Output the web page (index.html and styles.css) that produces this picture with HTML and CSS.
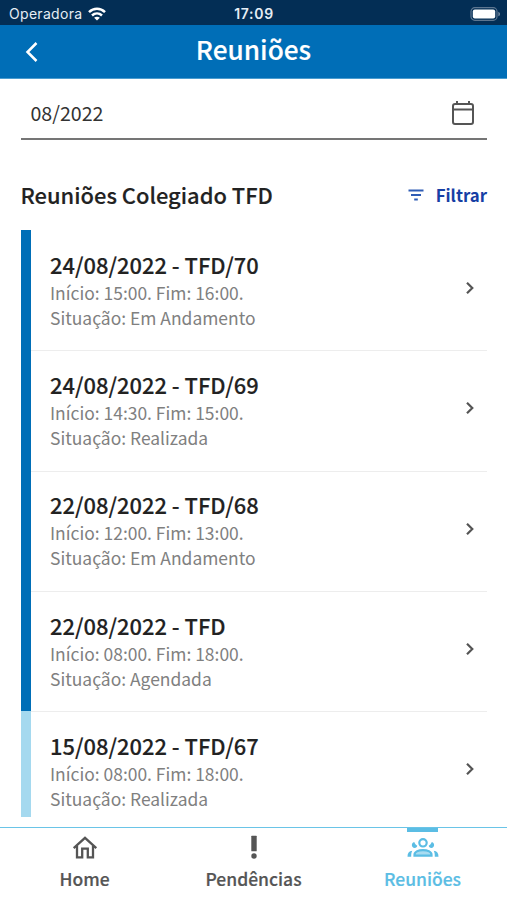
FILE: index.html
```html
<!DOCTYPE html>
<html lang="pt-BR">
<head>
<meta charset="utf-8">
<title>Reuniões</title>
<link rel="stylesheet" href="styles.css">
</head>
<body>
<div class="app">
  <div class="status">
    <div class="carrier"><span class="carrier-name">Operadora</span>
      <svg class="wifi" viewBox="0 0 18 14" width="18" height="14" fill="none" stroke="#fff" stroke-width="2.5"><path d="M1 5.2C5.6.7 12.4.7 17 5.2M4 8.5c2.9-2.7 7.1-2.7 10 0"/><path d="M9 13.6 6.1 10.8c1.7-1.5 4.1-1.5 5.8 0z" fill="#fff" stroke="none"/></svg>
    </div>
    <span class="clock">17:09</span>
    <svg class="battery" viewBox="0 0 31 14" width="31" height="14"><rect x="1" y=".7" width="26" height="12.6" rx="3.8" fill="none" stroke="#5d7690" stroke-width="1.2"/><rect x="2.8" y="2.5" width="22.4" height="9" rx="2" fill="#fff"/><path d="M28.3 4.7c2.3.9 2.3 3.7 0 4.6z" fill="#7389a0"/></svg>
  </div>
  <header class="header">
    <svg class="back" viewBox="0 0 14 22" width="14" height="22" fill="none" stroke="#fff" stroke-width="2.5"><path d="M12.5 2 3.5 11l9 9"/></svg>
    <h1 class="title">Reuniões</h1>
  </header>
  <main class="content">
    <div class="field"><span class="field-value">08/2022</span>
      <svg class="calendar" viewBox="0 0 24 26" width="24" height="26" fill="none" stroke="#555" stroke-width="2"><rect x="2" y="4" width="20" height="20" rx="2"/><path d="M2 9.4h20M6 1v3M18 1v3"/></svg>
    </div>
    <div class="section">
      <h2 class="section-title">Reuniões Colegiado TFD</h2>
      <div class="filter"><svg viewBox="0 0 16 12" width="16" height="12" stroke="#2f5db5" stroke-width="2"><path d="M.5 1.6h15M3 6h10M6.2 10.4h3.6"/></svg><span class="filter-label">Filtrar</span></div>
    </div>
    <div class="list">
      <div class="row"><div class="info"><h3 class="name">24/08/2022 - TFD/70</h3><p class="detail">Início: 15:00. Fim: 16:00.</p><p class="detail">Situação: Em Andamento</p></div><svg class="chevron" viewBox="0 0 10 14" width="10" height="14"><path d="m2 1.7 5.3 5.3L2 12.3"/></svg></div>
      <div class="row"><div class="info"><h3 class="name">24/08/2022 - TFD/69</h3><p class="detail">Início: 14:30. Fim: 15:00.</p><p class="detail">Situação: Realizada</p></div><svg class="chevron" viewBox="0 0 10 14" width="10" height="14"><path d="m2 1.7 5.3 5.3L2 12.3"/></svg></div>
      <div class="row"><div class="info"><h3 class="name">22/08/2022 - TFD/68</h3><p class="detail">Início: 12:00. Fim: 13:00.</p><p class="detail">Situação: Em Andamento</p></div><svg class="chevron" viewBox="0 0 10 14" width="10" height="14"><path d="m2 1.7 5.3 5.3L2 12.3"/></svg></div>
      <div class="row"><div class="info"><h3 class="name">22/08/2022 - TFD</h3><p class="detail">Início: 08:00. Fim: 18:00.</p><p class="detail">Situação: Agendada</p></div><svg class="chevron" viewBox="0 0 10 14" width="10" height="14"><path d="m2 1.7 5.3 5.3L2 12.3"/></svg></div>
      <div class="row row-past"><div class="info"><h3 class="name">15/08/2022 - TFD/67</h3><p class="detail">Início: 08:00. Fim: 18:00.</p><p class="detail">Situação: Realizada</p></div><svg class="chevron" viewBox="0 0 10 14" width="10" height="14"><path d="m2 1.7 5.3 5.3L2 12.3"/></svg></div>
    </div>
  </main>
  <nav class="tabs">
    <div class="tab"><svg class="tab-icon" viewBox="0 0 32 26" width="32" height="26" fill="none" stroke="#555" stroke-width="2.3"><path d="M4.7 13.2 16 2.9l11.3 10.3M8 11v11.3h5.2v-8.6h5.6v8.6H24V11"/></svg><span class="tab-label">Home</span></div>
    <div class="tab"><svg class="tab-icon" viewBox="0 0 32 26" width="32" height="26" fill="#555"><rect x="13.3" y=".7" width="5.4" height="15.6" rx=".5"/><circle cx="16" cy="21" r="2.7"/></svg><span class="tab-label">Pendências</span></div>
    <div class="tab tab-active"><svg class="tab-icon" viewBox="0 0 32 26" width="32" height="26" fill="#5bbde4"><circle cx="16" cy="7.8" r="3.7" fill="none" stroke="#5bbde4" stroke-width="2.2"/><path d="M7.5 20.6v-.9c0-6.2 17-6.2 17 0v.9z" fill="#a9dcf1" stroke="#5bbde4" stroke-width="2.2"/><path d="M7.2 7C3.9 7.8 4.2 12.8 7.6 12.9c1.7 0 2.5-1 2.7-2.1C8.7 10 8.1 8.7 7.2 7zM24.8 7c3.3.8 3 5.8-.4 5.9-1.7 0-2.5-1-2.7-2.1 1.6-.8 2.2-2.1 3.1-3.8zM.5 21.7c0-3.6 1.4-5.6 4.8-6-.9 1.7-1.1 3.2-1.1 6zM31.5 21.7c0-3.6-1.4-5.6-4.8-6 .9 1.7 1.1 3.2 1.1 6z"/></svg><span class="tab-label">Reuniões</span></div>
  </nav>
</div>
</body>
</html>
```
FILE: styles.css
```css
* { box-sizing: border-box; margin: 0; padding: 0; }
body { background: #fff; font-family: "Noto Sans CJK JP", "Noto Sans", sans-serif; color: #222; }
svg { display: block; flex: none; }
span, h1, h2, h3, p { white-space: nowrap; }
.app { width: 507px; height: 900px; display: flex; flex-direction: column; overflow: hidden; }
.status { height: 25px; flex: none; background: #032e55; display: grid; grid-template-columns: 1fr auto 1fr; align-items: center; padding: 2px 6px 0 9px; font-family: Inter, sans-serif; color: #e6edf4; }
.carrier { display: flex; align-items: center; gap: 6px; }
.carrier-name { font-size: 14px; line-height: 20px; letter-spacing: .3px; }
.clock { font-size: 14px; font-weight: 600; line-height: 20px; letter-spacing: .7px; margin-right: 2px; }
.battery { justify-self: end; }
.header { height: 54px; flex: none; background: #006eb7; border-bottom: 1px solid #4a9ccf; display: grid; grid-template-columns: 48px 1fr 48px; align-items: center; color: #fff; }
.back { margin-left: 24px; }
.title { text-align: center; font-size: 26.2px; font-weight: 500; line-height: 36px; padding-bottom: 6px; -webkit-text-stroke: .15px; }
.content { flex: 1; min-height: 0; padding: 11px 20px 0 20.5px; }
.field { height: 50px; border-bottom: 2px solid #757575; display: flex; justify-content: space-between; align-items: center; padding: 0 12px 2px 10px; }
.field-value { font-size: 19.6px; line-height: 28px; color: #333; }
.section { height: 90px; display: flex; align-items: center; justify-content: space-between; padding-top: 20px; }
.section-title { font-size: 21.9px; font-weight: 500; line-height: 32px; -webkit-text-stroke: .15px; }
.filter { display: flex; align-items: center; gap: 12px; color: #173fa5; }
.filter-label { font-size: 16.8px; font-weight: 700; line-height: 28px; }
.list { height: 587px; overflow: hidden; }
.row { height: 120.33px; border-left: 10px solid #006eb7; display: flex; justify-content: space-between; align-items: center; padding: 0 12px 4px 19.5px; }
.row + .row { background: linear-gradient(#ededed, #ededed) top / 100% 1px no-repeat; }
.row-past { border-left-color: #a5d9ef; }
.info { padding-top: 3px; }
.name { font-size: 21.9px; font-weight: 500; line-height: 30px; -webkit-text-stroke: .15px; }
.detail { font-size: 17.45px; line-height: 25px; color: #808080; }
.chevron { fill: none; stroke: #555; stroke-width: 2.2; }
.tabs { height: 73px; flex: none; border-top: 1px solid #6ac4e7; display: grid; grid-template-columns: repeat(3, 1fr); }
.tab { display: flex; flex-direction: column; align-items: center; padding-top: 7px; color: #555; }
.tab-label { font-size: 17.5px; font-weight: 500; line-height: 28px; margin-top: 4px; -webkit-text-stroke: .2px; }
.tab-active { color: #5bbde4; background: linear-gradient(#5bbde4, #5bbde4) top center / 31px 4px no-repeat; }
```
